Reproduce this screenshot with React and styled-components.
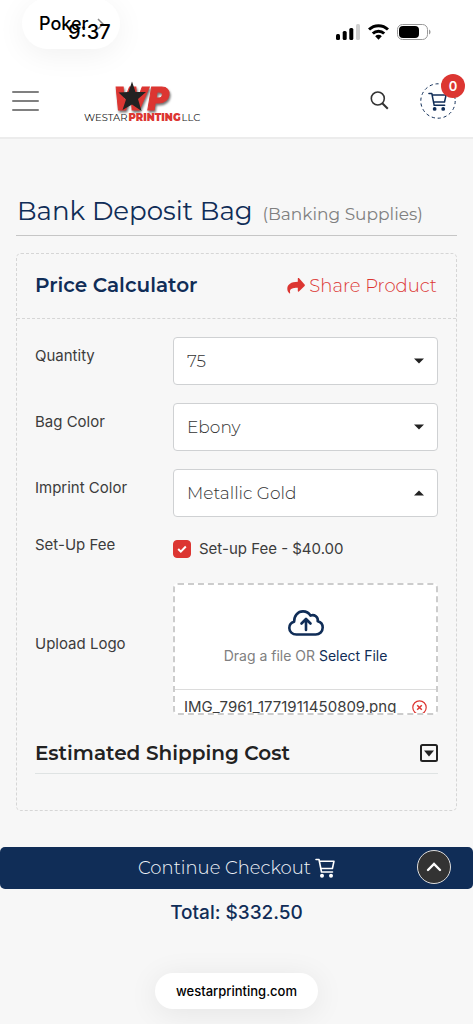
import React from "react";
import styled, { createGlobalStyle } from "styled-components";

const navy = "#102d57";
const red = "#dc3632";
const display = `"Montserrat", "Inter", sans-serif`;
const body = `"Inter", "Liberation Sans", sans-serif`;

const Global = createGlobalStyle`
  *, *::before, *::after { box-sizing: border-box; }
  body { margin: 0; background: #f7f7f7; color: #3c3c3c; font-family: ${body}; font-size: 15px; }
  button, input, select { font: inherit; color: inherit; margin: 0; }
  button { border: 0; padding: 0; background: none; cursor: pointer; }
  a { text-decoration: none; color: inherit; }
  h1, h2, p { margin: 0; font-weight: 400; }
  svg { display: block; flex: none; }
`;

const Page = styled.div`
  position: relative;
  min-height: 100vh;
  display: flex;
  flex-direction: column;
`;

const Header = styled.header`
  background: #fff;
  border-bottom: 2px solid #ececec;
`;

const StatusBar = styled.div`
  height: 64px;
  padding: 0 42px 0 68px;
  display: flex;
  align-items: center;
  justify-content: space-between;
`;

const Clock = styled.time`
  position: relative;
  z-index: 2;
  color: #000;
  font-size: 20px;
  font-weight: 500;
`;

const StatusIcons = styled.div`
  display: flex;
  align-items: center;
  gap: 8px;
`;

const BackPill = styled.button`
  position: absolute;
  z-index: 1;
  top: -2px;
  left: 22px;
  width: 98px;
  height: 51px;
  padding: 0 16px 0 17px;
  border-radius: 26px;
  background: #fff;
  box-shadow: 0 6px 30px rgba(0, 0, 0, 0.06);
  color: #000;
  font-size: 18px;
  font-weight: 500;
  display: flex;
  align-items: center;
  justify-content: space-between;
`;

const NavRow = styled.div`
  height: 73px;
  padding: 0 17px 0 12px;
  display: flex;
  align-items: center;
`;

const MenuButton = styled.button`
  width: 27px;
  height: 20px;
  display: flex;
  flex-direction: column;
  justify-content: space-between;
`;

const MenuLine = styled.span`
  height: 2px;
  border-radius: 1px;
  background: #808080;
`;

const Brand = styled.a`
  margin-left: 45px;
`;

const SearchButton = styled.button`
  margin-left: auto;
`;

const CartLink = styled.a`
  position: relative;
  margin-left: 31px;
  width: 36px;
  height: 36px;
`;

const CartBadge = styled.span`
  position: absolute;
  top: -9px;
  right: -9px;
  width: 24px;
  height: 24px;
  border-radius: 50%;
  background: ${red};
  color: #fff;
  font-size: 13px;
  font-weight: 600;
  display: grid;
  place-items: center;
`;

const Main = styled.main`
  padding: 54px 16px 0;
`;

const Title = styled.h1`
  padding: 0 0 6px 1px;
  border-bottom: 1px solid #c6c6c6;
  color: ${navy};
  font-family: ${display};
  font-size: 26px;
  line-height: 36px;
  white-space: nowrap;
`;

const Category = styled.small`
  margin-left: 3px;
  color: #808080;
  font-size: 17px;
  line-height: 1;
`;

const Card = styled.section`
  margin-top: 17px;
  border: 1px dashed #d6d6d6;
  border-radius: 5px;
`;

const CardHead = styled.div`
  height: 65px;
  padding: 0 19px 2px 18px;
  border-bottom: 1px dashed #d6d6d6;
  display: flex;
  align-items: center;
  justify-content: space-between;
`;

const Heading = styled.h2`
  color: ${(p) => (p.$dark ? "#222" : navy)};
  font-family: ${display};
  font-size: 20px;
  font-weight: 600;
  line-height: 24px;
`;

const ShareButton = styled.button`
  color: ${red};
  font-family: ${display};
  font-size: 18px;
  font-weight: 350;
  padding-top: 2px;
  display: flex;
  align-items: center;
  gap: 4px;
`;

const Form = styled.form`
  padding: 18px 18px 36px 18px;
  display: flex;
  flex-direction: column;
`;

const Row = styled.div`
  display: grid;
  grid-template-columns: 138px minmax(0, 1fr);
  align-items: ${(p) => (p.$tall ? "start" : "center")};
  margin-bottom: ${(p) => (p.$tall ? "24px" : "18px")};
`;

const Label = styled.label`
  line-height: 20px;
  padding-bottom: ${(p) => (p.$raised ? "10px" : "0")};
`;

const SelectWrap = styled.div`
  position: relative;
`;

const Select = styled.select`
  appearance: none;
  display: block;
  width: 100%;
  height: 48px;
  padding: 0 36px 0 13px;
  border: 1px solid #cfd1d3;
  border-radius: 4px;
  background: #fff;
  color: #333;
  font-family: ${display};
  font-size: 17px;
  font-weight: 350;
`;

const Caret = styled.svg`
  position: absolute;
  right: 14px;
  top: 21px;
  pointer-events: none;
  transform: ${(p) => (p.$open ? "rotate(180deg)" : "none")};
`;

const CheckLabel = styled.label`
  display: flex;
  align-items: center;
  gap: 8px;
  line-height: 20px;
  padding-top: 4px;
`;

const CheckBox = styled.span`
  position: relative;
  width: 18px;
  height: 18px;
`;

const CheckInput = styled.input`
  appearance: none;
  display: block;
  width: 18px;
  height: 18px;
  border: 1px solid ${red};
  border-radius: 4px;
  background: #fff;
  &:checked { background: ${red}; }
  & + svg { display: none; }
  &:checked + svg { display: block; position: absolute; inset: 0; pointer-events: none; }
`;

const DropZone = styled.div`
  height: 132px;
  border: 2px dashed #ccc;
  border-radius: 5px;
  background: #fff;
  overflow: hidden;
`;

const DropArea = styled.div`
  height: 105px;
  padding-top: 25px;
  border-bottom: 1px solid #dcdcdc;
  display: flex;
  flex-direction: column;
  align-items: center;
  gap: 10px;
  color: #808080;
  font-size: 14px;
  line-height: 20px;
`;

const SelectFile = styled.button`
  color: ${navy};
`;

const FileRow = styled.div`
  padding: 7px 9px 0 9px;
  display: flex;
  align-items: center;
  justify-content: space-between;
  font-size: 15px;
  line-height: 20px;
`;

const Shipping = styled.div`
  height: 41px;
  border-bottom: 1px solid #dfe3e3;
  display: flex;
  align-items: center;
  justify-content: space-between;
`;

const CheckoutWrap = styled.div`
  position: relative;
  margin-top: 36px;
`;

const CheckoutButton = styled.button`
  width: 100%;
  height: 42px;
  border-radius: 5px;
  background: ${navy};
  color: #f2f5f9;
  font-family: ${display};
  font-size: 18px;
  font-weight: 350;
  display: flex;
  align-items: center;
  justify-content: center;
  gap: 4px;
`;

const TopButton = styled.button`
  position: absolute;
  top: 3px;
  right: 22px;
  width: 34px;
  height: 34px;
  border: 1px solid #ddd;
  border-radius: 50%;
  background: #333;
  display: grid;
  place-items: center;
`;

const Total = styled.p`
  padding-top: 12px;
  color: ${navy};
  text-align: center;
  font-size: 19px;
  font-weight: 500;
  line-height: 24px;
`;

const AddressPill = styled.button`
  align-self: center;
  margin: auto 0 15px;
  height: 36px;
  padding: 0 21px;
  border-radius: 18px;
  background: #fff;
  box-shadow: 0 4px 30px rgba(0, 0, 0, 0.08);
  color: #000;
  font-size: 13px;
  font-weight: 500;
`;

const Emblem = styled.text`
  font: italic 900 32px "Inter", sans-serif;
  fill: ${red};
  stroke: ${red};
  stroke-width: 1px;
  filter: drop-shadow(1px 2px 1px rgba(0, 0, 0, 0.55));
`;

const Wordmark = styled.text`
  font: 400 10px ${display};
  fill: #222;
`;

const WordmarkStrong = styled.tspan`
  font-weight: 900;
  fill: ${red};
`;

function CartIcon({ size, color }) {
  return (
    <svg width={size} height={size} viewBox="0 0 20 20" fill="none" stroke={color} strokeWidth="1.6" strokeLinejoin="round" strokeLinecap="round" aria-hidden="true">
      <path d="M1 1.500h3L6.500 14h11M4.400 3.200h14.600L17.400 10.500H6" />
      <circle cx="7" cy="17.800" r="1.200" fill={color} />
      <circle cx="16" cy="17.800" r="1.200" fill={color} />
    </svg>
  );
}

function Logo() {
  return (
    <svg width="118" height="44" viewBox="0 0 118 44" role="img" aria-label="Westar Printing LLC">
      <Emblem x="29" y="31">WP</Emblem>
      <path d="M48 2.500L51.500 13H62L54 20l3.500 12L48 25.500 38.500 31 42 20.500 34.500 13.500l10-.5z" fill="#222" />
      <Wordmark x="0" y="42">WESTAR<WordmarkStrong dx="1">PRINTING</WordmarkStrong><tspan dx="1">LLC</tspan></Wordmark>
    </svg>
  );
}

function SelectRow({ id, label, value, open }) {
  return (
    <Row>
      <Label htmlFor={id} $raised>{label}</Label>
      <SelectWrap>
        <Select id={id} defaultValue={value}>
          <option>{value}</option>
        </Select>
        <Caret $open={open} width="10" height="6" viewBox="0 0 10 6" aria-hidden="true">
          <path d="M0 .5h10L5 5.500z" fill="#222" />
        </Caret>
      </SelectWrap>
    </Row>
  );
}

export default function App() {
  return (
    <Page>
      <Global />
      <Header>
        <StatusBar>
          <Clock>9:37</Clock>
          <StatusIcons>
            <svg width="24" height="16" viewBox="0 0 24 16">
              <rect x="0" y="10" width="4" height="6" rx="1.500" />
              <rect x="6.700" y="7" width="4" height="9" rx="1.500" />
              <rect x="13.300" y="4" width="4" height="12" rx="1.500" />
              <rect x="20" y="0" width="4" height="16" rx="1.500" fill="#d0d0d0" />
            </svg>
            <svg width="21" height="16" viewBox="0 0 21 16" fill="none" stroke="#000" strokeWidth="3">
              <path d="M1 5.500a13.600 13.600 0 0 1 19 0M4.800 9.500a8.200 8.200 0 0 1 11.400 0" />
              <path d="M7.200 12.200a4.700 4.700 0 0 1 6.600 0L10.500 15.700z" fill="#000" stroke="none" />
            </svg>
            <svg width="34" height="16" viewBox="0 0 34 16">
              <rect x=".5" y=".5" width="30" height="15" rx="5" fill="none" stroke="#999" />
              <rect x="2" y="2" width="20" height="12" rx="4" />
              <path d="M32 5.500c2 .8 2 4.200 0 5z" fill="#999" />
            </svg>
          </StatusIcons>
        </StatusBar>
        <NavRow>
          <MenuButton aria-label="Menu"><MenuLine /><MenuLine /><MenuLine /></MenuButton>
          <Brand href="#"><Logo /></Brand>
          <SearchButton aria-label="Search">
            <svg width="19" height="19" viewBox="0 0 19 19" fill="none" stroke="#333" strokeWidth="1.600">
              <circle cx="7.800" cy="7.500" r="6.500" /><path d="M12.300 12.300l5.500 5.500" strokeWidth="2" />
            </svg>
          </SearchButton>
          <CartLink href="#" aria-label="Cart">
            <svg width="36" height="36" viewBox="0 0 36 36" fill="none">
              <circle cx="18" cy="18" r="17.200" stroke={navy} strokeDasharray="3.200 2.800" />
              <g transform="translate(8 9)"><CartIcon size={19} color={navy} /></g>
            </svg>
            <CartBadge>0</CartBadge>
          </CartLink>
        </NavRow>
      </Header>
      <BackPill>
        Poker
        <svg width="7" height="12" viewBox="0 0 7 12" fill="none" stroke="#888" strokeWidth="1.500"><path d="M1 1l5 5-5 5" /></svg>
      </BackPill>

      <Main>
        <Title>Bank Deposit Bag <Category>(Banking Supplies)</Category></Title>
        <Card>
          <CardHead>
            <Heading>Price Calculator</Heading>
            <ShareButton>
              <svg width="18" height="16" viewBox="0 0 18 16" fill={red}>
                <path d="M10.800.6v3.200C4 3.900.3 6.500.3 10.700c0 2 .9 3.700 2.300 4.800.3.200.7-.1.600-.5C2.200 11.200 4.500 9.900 10.800 9.800V13c0 .6.700.9 1.100.5l5.700-5.600c.4-.4.400-.9 0-1.300L11.900.1c-.4-.4-1.100-.1-1.100.5z" />
              </svg>
              Share Product
            </ShareButton>
          </CardHead>
          <Form onSubmit={(e) => e.preventDefault()}>
            <SelectRow id="quantity" label="Quantity" value="75" />
            <SelectRow id="bag-color" label="Bag Color" value="Ebony" />
            <SelectRow id="imprint-color" label="Imprint Color" value="Metallic Gold" open />
            <Row $tall>
              <Label htmlFor="setup">Set-Up Fee</Label>
              <CheckLabel>
                <CheckBox>
                  <CheckInput id="setup" type="checkbox" defaultChecked />
                  <svg width="18" height="18" viewBox="0 0 18 18" fill="none" stroke="#fff" strokeWidth="2"><path d="M5.200 9l2.600 2.600L12.800 6.500" /></svg>
                </CheckBox>
                Set-up Fee - $40.00
              </CheckLabel>
            </Row>
            <Row>
              <Label htmlFor="logo-file" $raised>Upload Logo</Label>
              <DropZone>
                <DropArea>
                  <svg width="36" height="26" viewBox="0 0 36 26" fill="none" stroke={navy} strokeWidth="2.600" strokeLinecap="round" strokeLinejoin="round">
                    <path d="M8.500 24.500C4.300 24.500 1.300 21.600 1.300 18c0-3 2-5.400 4.800-6.200C6 5.800 9.800 1.400 15 1.400c3.200 0 6 1.600 7.500 4.200 4-1.600 8 1.600 7.200 5.700 2.900.7 5 3.100 5 6.200 0 3.900-3 7-7 7z" />
                    <path d="M18 20V9.500M13.500 13.500L18 9l4.500 4.500" />
                  </svg>
                  <span>Drag a file OR <SelectFile id="logo-file" type="button">Select File</SelectFile></span>
                </DropArea>
                <FileRow>
                  <span>IMG_7961_1771911450809.png</span>
                  <button type="button" aria-label="Remove file">
                    <svg width="15" height="15" viewBox="0 0 15 15" fill="none" stroke={red} strokeWidth="1.200">
                      <circle cx="7.500" cy="7.500" r="6.700" /><path d="M5.200 5.200l4.600 4.600M9.800 5.200L5.200 9.800" strokeWidth="1.500" />
                    </svg>
                  </button>
                </FileRow>
              </DropZone>
            </Row>
            <Shipping>
              <Heading $dark>Estimated Shipping Cost</Heading>
              <button type="button" aria-label="Toggle shipping cost">
                <svg width="18" height="18" viewBox="0 0 18 18"><rect x="1" y="1" width="16" height="16" rx="1.500" fill="none" stroke="#222" strokeWidth="2" /><path d="M4 6.500h10L9 12.500z" fill="#222" /></svg>
              </button>
            </Shipping>
          </Form>
        </Card>
      </Main>

      <CheckoutWrap>
        <CheckoutButton>
          Continue Checkout
          <CartIcon size={20} color="#fff" />
        </CheckoutButton>
        <TopButton aria-label="Back to top">
          <svg width="16" height="10" viewBox="0 0 16 10" fill="none" stroke="#fff" strokeWidth="2.400" strokeLinecap="round"><path d="M2 8l6-6 6 6" /></svg>
        </TopButton>
      </CheckoutWrap>
      <Total>Total: $332.50</Total>
      <AddressPill>westarprinting.com</AddressPill>
    </Page>
  );
}
